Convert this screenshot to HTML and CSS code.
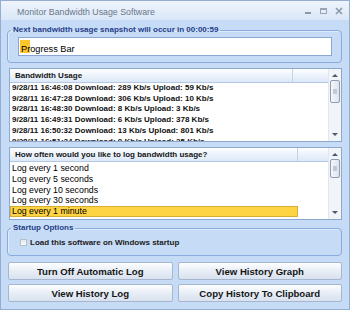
FILE: index.html
```html
<!DOCTYPE html>
<html lang="en">
<head>
  <meta charset="UTF-8">
  <title>Monitor Bandwidth Usage Software</title>
  <link rel="stylesheet" href="styles.css">
</head>
<body>
  <div class="window">
    <div class="titlebar">
      <span class="title">Monitor Bandwidth Usage Software</span>
      <div class="controls">
        <svg width="8" height="8" viewBox="0 0 8 8"><rect x="1" y="5" width="6" height="2" fill="#8d99aa"/></svg>
        <svg width="9" height="8" viewBox="0 0 9 8"><rect x="1.5" y="1.5" width="6" height="5" fill="none" stroke="#9aa5b4"/><rect x="1" y="1" width="7" height="2" fill="#9aa5b4"/></svg>
        <svg width="8" height="8" viewBox="0 0 8 8"><path d="M1 1 L7 7 M7 1 L1 7" stroke="#8d99aa" stroke-width="1.6"/></svg>
      </div>
    </div>

    <div class="content">
      <fieldset class="group snap">
        <legend>Next bandwidth usage snapshot will occur in 00:00:59</legend>
        <div class="progress">
          <span class="progress-fill"></span>
          <span class="progress-label">Progress Bar</span>
        </div>
      </fieldset>

      <div class="list usage">
        <div class="list-main">
          <div class="list-head">
            <span class="col-title">Bandwidth Usage</span>
            <span class="col-rest"></span>
          </div>
          <ul class="rows">
            <li>9/28/11 16:46:08 Download: 289 Kb/s Upload: 59 Kb/s</li>
            <li>9/28/11 16:47:28 Download: 306 Kb/s Upload: 10 Kb/s</li>
            <li>9/28/11 16:48:30 Download: 8 Kb/s Upload: 3 Kb/s</li>
            <li>9/28/11 16:49:31 Download: 6 Kb/s Upload: 378 Kb/s</li>
            <li>9/28/11 16:50:32 Download: 13 Kb/s Upload: 801 Kb/s</li>
            <li>9/28/11 16:51:34 Download: 9 Kb/s Upload: 25 Kb/s</li>
          </ul>
        </div>
        <div class="scroll">
          <span class="arrow up"></span>
          <span class="thumb"><i></i></span>
          <span class="track"></span>
          <span class="arrow down"></span>
        </div>
      </div>

      <div class="list interval">
        <div class="list-main">
          <div class="list-head">
            <span class="col-title">How often would you like to log bandwidth usage?</span>
            <span class="col-rest"></span>
          </div>
          <ul class="rows">
            <li>Log every 1 second</li>
            <li>Log every 5 seconds</li>
            <li>Log every 10 seconds</li>
            <li>Log every 30 seconds</li>
            <li class="selected">Log every 1 minute</li>
          </ul>
        </div>
        <div class="scroll">
          <span class="arrow up"></span>
          <span class="thumb"><i></i></span>
          <span class="track"></span>
          <span class="arrow down"></span>
        </div>
      </div>

      <fieldset class="group startup">
        <legend>Startup Options</legend>
        <label class="check-row"><span class="checkbox"></span>Load this software on Windows startup</label>
      </fieldset>

      <div class="buttons">
        <button class="btn">Turn Off Automatic Log</button>
        <button class="btn">View History Graph</button>
        <button class="btn">View History Log</button>
        <button class="btn">Copy History To Clipboard</button>
      </div>
    </div>
  </div>
</body>
</html>
```

FILE: styles.css
```css
* {
  box-sizing: border-box;
}

body {
  margin: 0;
  font-family: "Liberation Sans", Arial, sans-serif;
  background: #c5daf5;
}

.window {
  width: 350px;
  height: 310px;
  border: 1px solid #94add1;
  background: #c6dbf6;
  overflow: hidden;
}

.titlebar {
  height: 19px;
  display: flex;
  align-items: center;
  justify-content: space-between;
  padding: 0 6px 0 16px;
  background: linear-gradient(to bottom, #eef4fc, #dae7f8);
}

.title {
  font-size: 8.8px;
  color: #6a7789;
  padding-top: 2px;
}

.controls {
  display: flex;
  gap: 7px;
  align-items: center;
}

.content {
  padding: 0 7px 0 6px;
}

/* group boxes */
.group {
  margin: 0;
  padding: 0 3px;
  border: 1px solid #8aabde;
  border-radius: 4px;
  box-shadow: inset 1px 1px 0 rgba(255,255,255,0.45);
}

.group legend {
  padding: 0 2px;
  font-size: 8px;
  line-height: 10px;
  font-weight: bold;
  color: #1f3d88;
}

.snap {
  margin-top: 5px;
  padding-bottom: 6px;
}

.progress {
  position: relative;
  margin: 2px 6px 0 7px;
  height: 19px;
  border: 1px solid #8ba6d1;
  background: white;
  padding-left: 2px;
}

.progress-fill {
  position: absolute;
  left: 1px;
  top: 2px;
  width: 10px;
  height: 13px;
  background: #fdc72c;
}

.progress-label {
  position: relative;
  font-size: 9.2px;
  line-height: 17px;
  color: #000;
}

/* list views */
.list {
  display: flex;
  margin-left: 2px;
  border: 1px solid #8ea8cd;
  background: white;
}

.usage {
  margin-top: 5px;
  height: 74px;
}

.interval {
  margin-top: 5px;
  height: 73px;
}

.list-main {
  flex: 1;
  display: flex;
  flex-direction: column;
  overflow: hidden;
}

.list-head {
  display: flex;
  height: 14px;
  flex: none;
  background: linear-gradient(to bottom, #fdfeff, #dce8f8);
  border-bottom: 1px solid #b4c7e3;
}

.col-title {
  padding-left: 5px;
  font-size: 8px;
  line-height: 13px;
  font-weight: bold;
  color: #151515;
  border-right: 1px solid #c3d3ec;
}

.usage .col-title {
  width: 283px;
}

.interval .col-title {
  width: 288px;
}

.rows {
  list-style: none;
  margin: 0;
  padding: 0;
  overflow: hidden;
}

.rows li {
  white-space: nowrap;
  padding-left: 2px;
  color: #111;
}

.usage .rows li {
  font-size: 8px;
  font-weight: bold;
  line-height: 10.7px;
}

.interval .rows {
  padding-top: 1px;
}

.interval .rows li {
  font-size: 8.8px;
  line-height: 10.8px;
  width: 288px;
  color: #000;
}

.interval .rows li.selected {
  background: #fed444;
  box-shadow: inset 0 0 0 1px #d9ad33;
}

/* scroll bars */
.scroll {
  width: 13px;
  flex: none;
  display: flex;
  flex-direction: column;
  align-items: center;
  background: #f1f4f9;
  border-left: 1px solid #e1e7f0;
}

.arrow {
  flex: none;
  width: 0;
  height: 0;
  border-left: 3px solid transparent;
  border-right: 3px solid transparent;
}

.arrow.up {
  margin-top: 5px;
  border-bottom: 3px solid #4c586a;
}

.arrow.down {
  margin-bottom: 5px;
  border-top: 3px solid #4c586a;
}

.thumb {
  flex: none;
  margin-top: 3px;
  width: 10px;
  height: 23px;
  border: 1px solid #8e9db3;
  border-radius: 2px;
  background: linear-gradient(to right, #f4f6f9, #dfe4ec);
  display: flex;
  align-items: center;
  justify-content: center;
}

.interval .thumb {
  height: 19px;
}

.thumb i {
  width: 4px;
  height: 5px;
  background: #c2c9d4;
}

.track {
  flex: 1;
}

/* startup options */
.startup {
  margin-top: 3px;
  padding-bottom: 8px;
}

.check-row {
  display: flex;
  align-items: center;
  gap: 3px;
  margin: 4px 0 0 9px;
  height: 10px;
  font-size: 8px;
  font-weight: bold;
  color: #1a1a1a;
}

.checkbox {
  width: 7px;
  height: 7px;
  border: 1px solid #b7bfcb;
  background: linear-gradient(to bottom, #e3e7ed, #fbfcfd);
}

/* buttons */
.buttons {
  display: grid;
  grid-template-columns: 1fr 1fr;
  column-gap: 5px;
  row-gap: 4px;
  margin-top: 6px;
  margin-left: 1px;
}

.btn {
  height: 18px;
  padding: 0;
  font-family: "Liberation Sans", Arial, sans-serif;
  font-size: 9.6px;
  font-weight: bold;
  color: #151515;
  border: 1px solid #a6b6cc;
  border-radius: 2px;
  background: linear-gradient(to bottom, #fdfeff, #e8eef6 50%, #d8e1ee);
  cursor: pointer;
}
```
